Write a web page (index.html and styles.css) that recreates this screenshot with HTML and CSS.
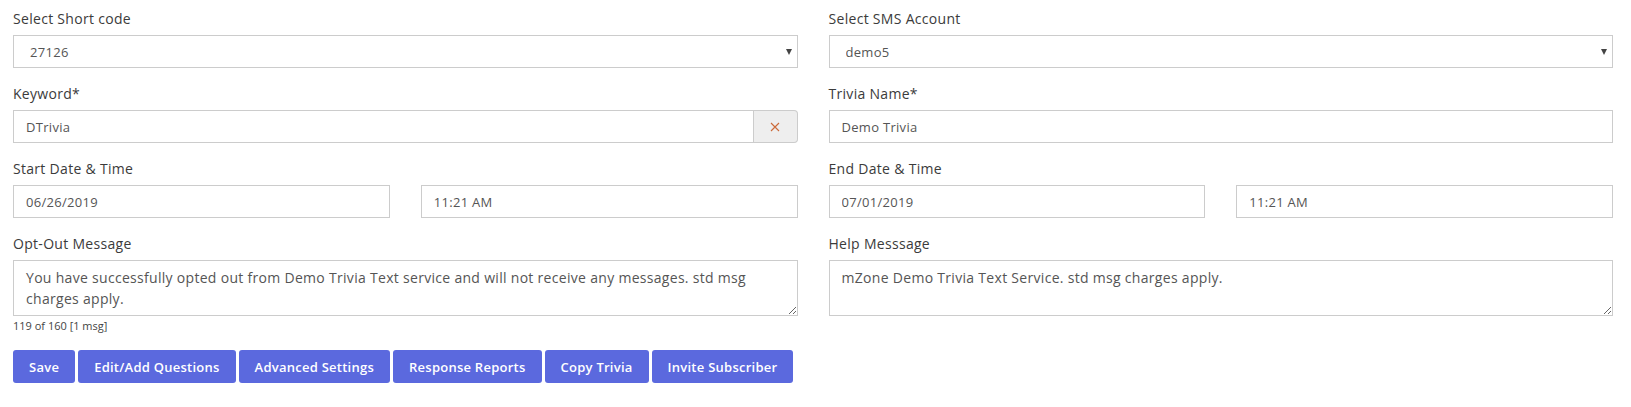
FILE: index.html
```html
<!DOCTYPE html>
<html lang="en">
  <head>
    <meta charset="UTF-8" />
    <meta name="viewport" content="width=device-width, initial-scale=1.0" />
    <link rel="stylesheet" href="styles.css">
  </head>
  <body>
    <form id="trivia-form">
      <div class="form-grid">
        <div class="field">
          <label>Select Short code</label>
          <div class="select-wrap">
            <select class="form-control">
              <option>27126</option>
            </select>
          </div>
        </div>
        <div class="field">
          <label>Select SMS Account</label>
          <div class="select-wrap">
            <select class="form-control">
              <option>demo5</option>
            </select>
          </div>
        </div>

        <div class="field">
          <label>Keyword*</label>
          <div class="input-group">
            <input type="text" class="form-control" value="DTrivia" />
            <span class="addon">
              <svg width="10" height="10" viewBox="0 0 10 10">
                <path d="M1 1 L9 9 M9 1 L1 9" stroke="#cc6a3a" stroke-width="1.1" fill="none" />
              </svg>
            </span>
          </div>
        </div>
        <div class="field">
          <label>Trivia Name*</label>
          <input type="text" class="form-control" value="Demo Trivia" />
        </div>

        <div class="field">
          <label>Start Date &amp; Time</label>
          <div class="split">
            <input type="text" class="form-control" value="06/26/2019" />
            <input type="text" class="form-control" value="11:21 AM" />
          </div>
        </div>
        <div class="field">
          <label>End Date &amp; Time</label>
          <div class="split">
            <input type="text" class="form-control" value="07/01/2019" />
            <input type="text" class="form-control" value="11:21 AM" />
          </div>
        </div>

        <div class="field">
          <label>Opt-Out Message</label>
          <textarea class="form-control">You have successfully opted out from Demo Trivia Text service and will not receive any messages. std msg charges apply.</textarea>
          <div class="counter">119 of 160 [1 msg]</div>
        </div>
        <div class="field">
          <label>Help Messsage</label>
          <textarea class="form-control">mZone Demo Trivia Text Service. std msg charges apply.</textarea>
        </div>
      </div>

      <div class="actions">
        <button type="button" class="btn">Save</button>
        <button type="button" class="btn">Edit/Add Questions</button>
        <button type="button" class="btn">Advanced Settings</button>
        <button type="button" class="btn">Response Reports</button>
        <button type="button" class="btn">Copy Trivia</button>
        <button type="button" class="btn">Invite Subscriber</button>
      </div>
    </form>
  </body>
</html>
```

FILE: styles.css
```css
body {
  font-family: "Open Sans", sans-serif;
  background-color: #fff;
  color: #333;
  margin: 0;
  padding: 9px 18px 0 13px;
}

.form-grid {
  display: grid;
  grid-template-columns: 1fr 1fr;
  column-gap: 31px;
}

.field {
  margin-bottom: 16px;
}

.field label {
  display: block;
  font-size: 14px;
  line-height: 20px;
  color: #3b3b3b;
  margin-bottom: 6px;
  letter-spacing: 0.3px;
}

.form-control {
  display: block;
  width: 100%;
  box-sizing: border-box;
  height: 33px;
  padding: 0 12px;
  border: 1px solid #ccc;
  border-radius: 0;
  background-color: #fff;
  font-family: "Open Sans", sans-serif;
  font-size: 13px;
  color: #555;
  letter-spacing: 0.3px;
  outline: none;
}

.select-wrap {
  position: relative;
}

.select-wrap select {
  appearance: none;
  -webkit-appearance: none;
  padding-left: 16px;
}

.select-wrap::after {
  content: "";
  position: absolute;
  right: 6px;
  top: 14px;
  border-left: 3.5px solid transparent;
  border-right: 3.5px solid transparent;
  border-top: 6px solid #444;
}

.input-group {
  display: flex;
}

.input-group .form-control {
  flex: 1;
}

.addon {
  width: 44px;
  height: 33px;
  box-sizing: border-box;
  display: flex;
  align-items: center;
  justify-content: center;
  background-color: #eee;
  border: 1px solid #ccc;
  border-left: 0;
  border-radius: 0 4px 4px 0;
}

.split {
  display: grid;
  grid-template-columns: 1fr 1fr;
  column-gap: 31px;
}

textarea.form-control {
  height: 56px;
  padding: 6px 12px;
  line-height: 21px;
  font-size: 14px;
  resize: vertical;
}

.counter {
  font-size: 11px;
  line-height: 14px;
  color: #444;
  margin-top: 3px;
}

.field:has(.counter) {
  margin-bottom: 0;
}

.actions {
  margin-top: 17px;
  display: flex;
  gap: 3px;
}

.btn {
  height: 33px;
  padding: 0 16px;
  border: 0;
  border-radius: 3px;
  background-color: #5b69de;
  color: #fff;
  font-family: "Open Sans", sans-serif;
  font-size: 13px;
  font-weight: 600;
  letter-spacing: 0.25px;
  cursor: pointer;
}
```
